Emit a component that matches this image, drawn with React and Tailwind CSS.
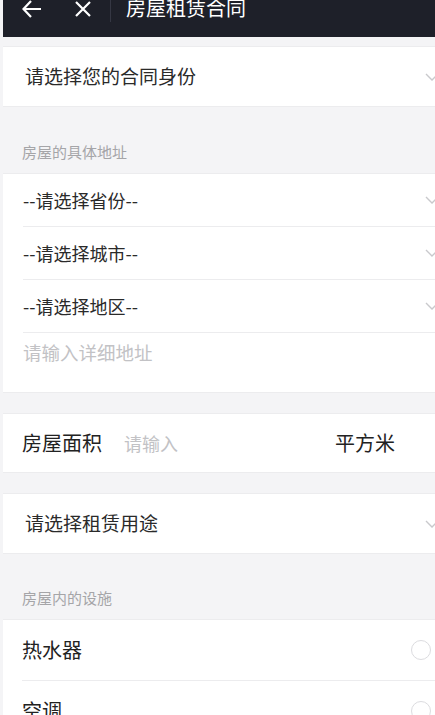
import { useState } from 'react'

const font = { fontFamily: '"Noto Sans CJK SC", "Noto Sans", sans-serif' }

function Chevron() {
  return (
    <svg width="14" height="8" viewBox="0 0 14 8" className="mr-[-4px] shrink-0">
      <path d="M1 1 L7 7 L13 1" fill="none" stroke="#c9c9cc" strokeWidth="1.4" />
    </svg>
  )
}

function SelectRow({ label, divider }) {
  return (
    <div className={`flex h-[53px] items-center justify-between ${divider ? 'border-b border-[#ececee]' : ''}`}>
      <span className="text-[18px] text-[#2a2a2a]">{label}</span>
      <Chevron />
    </div>
  )
}

function SectionLabel({ children, h }) {
  return (
    <div className={`flex items-end pb-[10px] pl-[19px] text-[15px] text-[#a5a5a8] ${h}`}>
      {children}
    </div>
  )
}

function Facility({ name, divider, checked, onToggle }) {
  return (
    <div
      className={`flex h-[61px] items-center justify-between pr-[4px] ${divider ? 'border-b border-[#ececee]' : ''}`}
      onClick={onToggle}
    >
      <span className="text-[20px] text-[#222]">{name}</span>
      <span className={`h-[20px] w-[20px] rounded-full border ${checked ? 'border-[#2f7cf6] bg-[#2f7cf6]' : 'border-[#dcdcdf]'}`}></span>
    </div>
  )
}

export default function App() {
  const [facilities, setFacilities] = useState({})
  const toggle = (k) => setFacilities({ ...facilities, [k]: !facilities[k] })

  return (
    <div className="h-[715px] overflow-hidden bg-[#f4f4f6] pl-[3px]" style={font}>
      {/* title bar */}
      <div className="flex h-[37px] items-start bg-[#1e2029] text-white">
        <div className="-mt-[4px] flex h-[24px] items-center">
          <svg width="20" height="18" viewBox="0 0 20 18" className="ml-[19px] mt-[2px]">
            <path d="M19 9 H2 M9 1 L1.5 9 L9 17" fill="none" stroke="#fff" strokeWidth="2.2" />
          </svg>
          <svg width="18" height="18" viewBox="0 0 18 18" className="ml-[32px] mt-[2px]">
            <path d="M2 2 L16 16 M16 2 L2 16" fill="none" stroke="#fff" strokeWidth="2.2" />
          </svg>
          <div className="ml-[18px] h-[28px] w-px bg-[#353743]"></div>
          <span className="ml-[15px] text-[20px] leading-[24px]">房屋租赁合同</span>
        </div>
      </div>

      <div className="h-[10px] border-b border-[#ececee]"></div>

      {/* identity */}
      <div className="flex h-[60px] items-center justify-between border-b border-[#ececee] bg-white pl-[22px]">
        <span className="text-[19px] text-[#2a2a2a]">请选择您的合同身份</span>
        <Chevron />
      </div>

      <SectionLabel h="h-[66px]">房屋的具体地址</SectionLabel>

      {/* address */}
      <div className="border-y border-[#ececee] bg-white pl-[20px]">
        <SelectRow label="--请选择省份--" divider />
        <SelectRow label="--请选择城市--" divider />
        <SelectRow label="--请选择地区--" divider />
        <div className="h-[59px] pt-[6px] text-[18.5px] text-[#c2c2c5]">请输入详细地址</div>
      </div>

      <div className="h-[20px]"></div>

      {/* area */}
      <div className="flex h-[60px] items-center border-y border-[#ececee] bg-white pl-[19px]">
        <span className="text-[20px] text-[#222]">房屋面积</span>
        <span className="ml-[22px] text-[18px] text-[#c2c2c5]">请输入</span>
        <span className="ml-auto mr-[40px] text-[20px] text-[#222]">平方米</span>
      </div>

      <div className="h-[20px]"></div>

      {/* purpose */}
      <div className="flex h-[61px] items-center justify-between border-y border-[#ececee] bg-white pl-[22px]">
        <span className="text-[19px] text-[#2a2a2a]">请选择租赁用途</span>
        <Chevron />
      </div>

      <SectionLabel h="h-[65px]">房屋内的设施</SectionLabel>

      {/* facilities */}
      <div className="border-t border-[#ececee] bg-white pl-[19px]">
        <Facility name="热水器" divider checked={facilities.heater} onToggle={() => toggle('heater')} />
        <Facility name="空调" divider checked={facilities.ac} onToggle={() => toggle('ac')} />
        <Facility name="冰箱" checked={facilities.fridge} onToggle={() => toggle('fridge')} />
      </div>
    </div>
  )
}
